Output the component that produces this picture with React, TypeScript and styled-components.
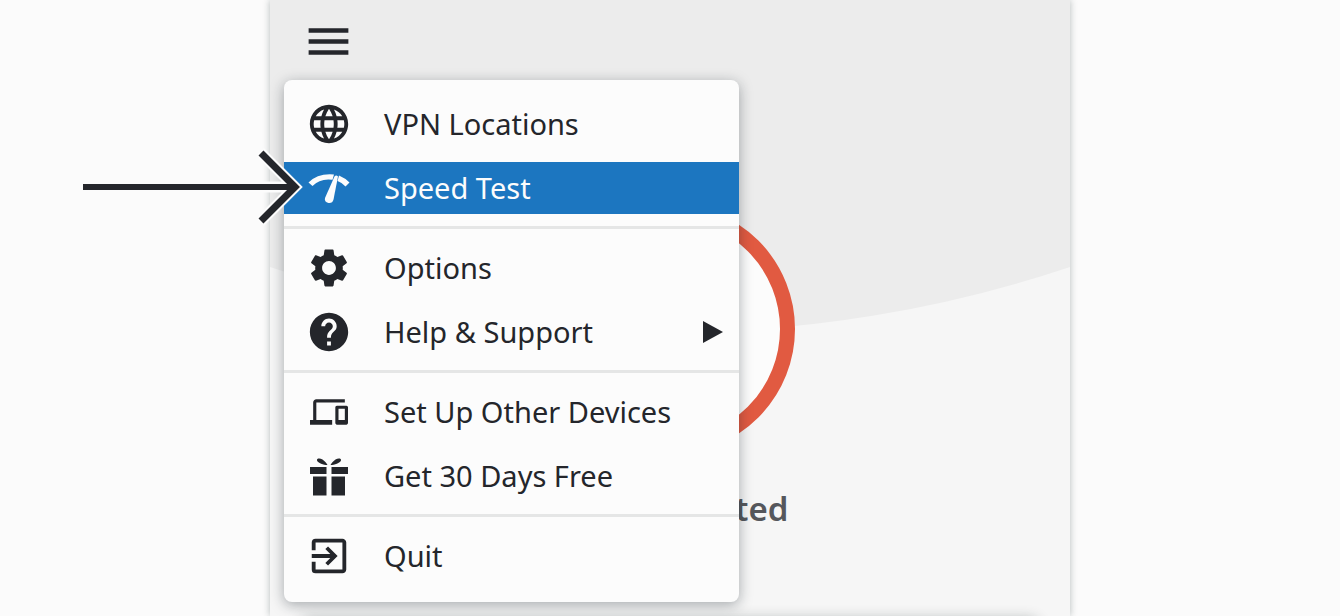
import React from 'react';
import styled, { createGlobalStyle } from 'styled-components';
import { MdMenu, MdLanguage, MdSettings, MdHelp, MdDevices, MdExitToApp } from 'react-icons/md';

const GlobalStyle = createGlobalStyle`
  * { box-sizing: border-box; }
  body {
    margin: 0;
    background: #fbfbfb;
    color: #24262b;
    font-family: 'Noto Sans', 'Open Sans', sans-serif;
  }
`;

const Page = styled.main`
  display: flex;
  justify-content: center;
  min-height: 100vh;
  overflow: hidden;
`;

const AppWindow = styled.section`
  position: relative;
  display: flex;
  flex-direction: column;
  flex: 0 1 800px;
  background: #f6f6f6;
  box-shadow: 0 0 7px rgba(20, 40, 40, 0.3);
`;

const Backdrop = styled.svg`
  position: absolute;
  top: 0;
  left: 0;
  width: 100%;
  height: 340px;
`;

const TopBar = styled.header`
  position: relative;
  display: flex;
  padding: 15px 32px;
`;

const MenuButton = styled.button`
  display: flex;
  padding: 0;
  border: 0;
  background: none;
  color: #24262b;
`;

const Status = styled.div`
  position: relative;
  display: flex;
  flex-direction: column;
  align-items: center;
  gap: 33px;
  padding-top: 121px;
`;

const PowerRing = styled.button`
  width: 250px;
  height: 250px;
  border: 15px solid #e15a41;
  border-radius: 50%;
  background: #fcfcfc;
`;

const StatusText = styled.p`
  margin: 0;
  color: #55575c;
  font-size: 33px;
  line-height: 44px;
  font-weight: 600;
`;

const LocationCard = styled.div`
  position: relative;
  height: 80px;
  margin: 88px 32px -100px;
  border-radius: 8px;
  background: #fcfcfc;
  box-shadow: 0 0 14px rgba(20, 40, 40, 0.3);
`;

const Menu = styled.nav`
  position: absolute;
  top: 80px;
  left: 14px;
  display: flex;
  flex-direction: column;
  gap: 12px;
  width: 455px;
  padding: 18px 0 20px;
  border-radius: 8px;
  background: #fcfcfc;
  box-shadow: 0 3px 14px rgba(20, 30, 40, 0.36);
`;

const MenuItem = styled.button<{ $active?: boolean }>`
  display: flex;
  align-items: center;
  gap: 32px;
  height: 52px;
  padding: 0 16px 0 21px;
  border: 0;
  background: ${(p) => (p.$active ? '#1c76c0' : 'transparent')};
  color: ${(p) => (p.$active ? '#fcfcfc' : '#24262b')};
  font: inherit;
  font-size: 29px;
  line-height: 40px;
  text-align: left;
`;

const IconSlot = styled.span`
  display: flex;
  justify-content: center;
  width: 47px;
`;

const Label = styled.span`
  flex: 1;
  white-space: nowrap;
`;

const Separator = styled.hr`
  width: 100%;
  height: 3px;
  margin: 0 0 1px;
  border: 0;
  background: #e5e6e6;
`;

const Pointer = styled.svg`
  position: absolute;
  top: 147px;
  left: -190px;
  pointer-events: none;
`;

const SpeedIcon = () => (
  <svg width="46" height="46" viewBox="0 0 46 46" fill="currentColor" aria-hidden="true">
    <path d="M2.500 17.500Q12 8 28 9.500L26.500 14.700Q14 13 6.500 21Z" />
    <path d="M33 10.500Q39 13 43.500 17.500L39.500 21.500Q36 17.500 31.500 16Z" />
    <path d="M28.500 11.500Q30 9.500 32 11.500L27.500 34.500Q26.500 38.500 22.500 38Q18 37 19 33Z" />
  </svg>
);

const GiftIcon = () => (
  <svg width="46" height="46" viewBox="0 0 46 46" fill="currentColor" aria-hidden="true">
    <path d="M4 14H20.500V21H4zM25.500 14H42V21H25.500zM7 23.500H20.500V42.500H7zM25.500 23.500H39V42.500H25.500z" />
    <path d="M21.500 12C17.500 12 12 10 11 7.500C10.500 5 14 5 16.500 6.500C18.500 8 20.500 10 21.500 12ZM24.500 12C28.500 12 34 10 35 7.500C35.500 5 32 5 29.500 6.500C27.500 8 25.500 10 24.500 12Z" />
  </svg>
);

const Submenu = () => (
  <svg width="20" height="22" viewBox="0 0 20 22" fill="currentColor" aria-hidden="true">
    <path d="M0 0L20 11L0 22Z" />
  </svg>
);

export default function App() {
  return (
    <>
      <GlobalStyle />
      <Page>
        <AppWindow>
          <Backdrop viewBox="0 0 800 340" preserveAspectRatio="none" aria-hidden="true">
            <path d="M0 0H800V267A1260 1260 0 0 1 0 267Z" fill="#ececec" />
          </Backdrop>
          <TopBar>
            <MenuButton aria-label="Menu">
              <MdMenu size={53} />
            </MenuButton>
          </TopBar>
          <Status>
            <PowerRing aria-label="Connect" />
            <StatusText>Not connected</StatusText>
          </Status>
          <LocationCard />
          <Menu>
            <MenuItem>
              <IconSlot><MdLanguage size={46} /></IconSlot>
              <Label>VPN Locations</Label>
            </MenuItem>
            <MenuItem $active>
              <IconSlot><SpeedIcon /></IconSlot>
              <Label>Speed Test</Label>
            </MenuItem>
            <Separator />
            <MenuItem>
              <IconSlot><MdSettings size={46} /></IconSlot>
              <Label>Options</Label>
            </MenuItem>
            <MenuItem>
              <IconSlot><MdHelp size={46} /></IconSlot>
              <Label>Help &amp; Support</Label>
              <Submenu />
            </MenuItem>
            <Separator />
            <MenuItem>
              <IconSlot><MdDevices size={38} /></IconSlot>
              <Label>Set Up Other Devices</Label>
            </MenuItem>
            <MenuItem>
              <IconSlot><GiftIcon /></IconSlot>
              <Label>Get 30 Days Free</Label>
            </MenuItem>
            <Separator />
            <MenuItem>
              <IconSlot><MdExitToApp size={46} /></IconSlot>
              <Label>Quit</Label>
            </MenuItem>
          </Menu>
          <Pointer width="226" height="80" viewBox="0 0 226 80" fill="none" aria-hidden="true">
            <path d="M180 5L215 40L180 75M170 40H214" stroke="#fcfcfc" strokeWidth="11" />
            <path d="M3 40H214" stroke="#24262b" strokeWidth="6" />
            <path d="M181 6L215 40L181 74" stroke="#24262b" strokeWidth="7" />
          </Pointer>
        </AppWindow>
      </Page>
    </>
  );
}
